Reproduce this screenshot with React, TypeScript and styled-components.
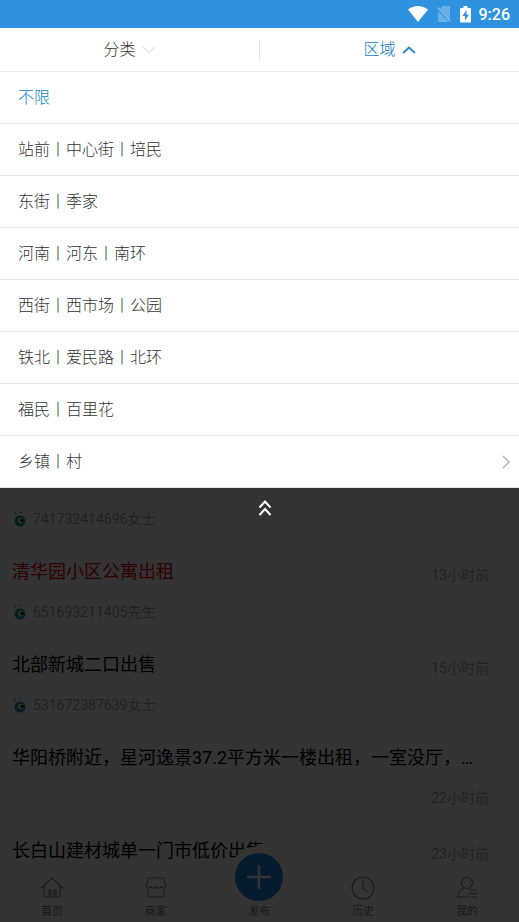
import React from "react";
import styled, { createGlobalStyle } from "styled-components";

const GlobalStyle = createGlobalStyle`
  * { box-sizing: border-box; }
  body {
    margin: 0;
    background: #fff;
    font-family: Roboto, "Noto Sans CJK SC", sans-serif;
  }
  button { font-family: inherit; }
`;

const Page = styled.div`
  display: flex;
  flex-direction: column;
  height: 100vh;
  overflow: hidden;
`;

const StatusBar = styled.header`
  display: flex;
  align-items: center;
  justify-content: flex-end;
  flex: none;
  height: 28px;
  padding-right: 9px;
  background: #2f92df;
  color: #fff;
  font-size: 16px;
  font-weight: 500;
`;

const StatusIcon = styled.svg`
  flex: none;
  margin-right: 8px;
`;

const FilterBar = styled.nav`
  display: flex;
  align-items: center;
  flex: none;
  height: 44px;
  border-bottom: 1px solid #ebebeb;
`;

const FilterTab = styled.button<{ $active?: boolean }>`
  display: flex;
  align-items: center;
  justify-content: center;
  flex: 1;
  gap: 6px;
  height: 20px;
  padding: 0;
  border: 0;
  background: none;
  color: ${(p) => (p.$active ? "#0c7cc4" : "#333")};
  font-size: 16px;
  font-weight: 300;
  line-height: 20px;

  & + & { border-left: 1px solid #e4e4e8; }
`;

const AreaMenu = styled.ul`
  flex: none;
  margin: 0;
  padding: 0;
  list-style: none;
`;

const AreaOption = styled.button<{ $selected?: boolean }>`
  display: flex;
  align-items: center;
  justify-content: space-between;
  width: 100%;
  height: 52px;
  padding: 0 8px 0 18px;
  border: 0;
  border-bottom: 1px solid #e6e6e6;
  background: #fff;
  color: ${(p) => (p.$selected ? "#0c84c8" : "#333")};
  font-size: 16px;
  font-weight: 300;
  line-height: 24px;
  text-align: left;
`;

const Behind = styled.div`
  display: flex;
  flex: 1;
  flex-direction: column;
  min-height: 0;
  position: relative;
  overflow: hidden;
`;

const Dim = styled.div`
  position: absolute;
  inset: 0;
  padding-top: 11px;
  background: rgba(0, 0, 0, 0.8);
  text-align: center;
`;

const CollapseButton = styled.button`
  margin-left: 10px;
  padding: 0;
  border: 0;
  background: none;
  line-height: 0;
`;

const Feed = styled.main`
  flex: 1;
  min-height: 0;
  padding: 21px 30px 0 12px;
  overflow: hidden;
`;

const Post = styled.article`
  padding-bottom: 29px;
`;

const PostHead = styled.div`
  display: flex;
  align-items: center;
  justify-content: space-between;
  height: 28px;
  margin-bottom: 16px;
`;

const PostTitle = styled.h2<{ $hot?: boolean }>`
  margin: 0;
  color: ${(p) => (p.$hot ? "#f00010" : "#000")};
  font-size: 18px;
  font-weight: 400;
  line-height: 28px;
  white-space: nowrap;
`;

const PostTime = styled.time`
  margin-top: 6px;
  color: #a4a4a4;
  font-size: 14px;
  line-height: 20px;
  white-space: nowrap;
`;

const PostFoot = styled.div<{ $end?: boolean }>`
  display: flex;
  align-items: center;
  justify-content: ${(p) => (p.$end ? "flex-end" : "flex-start")};
  gap: 6px;
  height: 20px;
  color: #a4a4a4;
  font-size: 14px;
  line-height: 20px;

  time { margin-top: 0; }
`;

const TabBar = styled.nav`
  display: flex;
  flex: none;
  height: 54px;
  border-top: 1px solid #eee;
  background: #fff;
`;

const TabItem = styled.button`
  display: flex;
  flex: 1;
  flex-direction: column;
  align-items: center;
  justify-content: flex-end;
  gap: 4px;
  position: relative;
  padding: 0 0 2px;
  border: 0;
  background: none;
  color: #777;
  font-size: 11px;
  line-height: 16px;
`;

const PublishDisc = styled.span`
  display: flex;
  align-items: center;
  justify-content: center;
  position: absolute;
  bottom: 14px;
  width: 62px;
  height: 62px;
  border: 7px solid #fff;
  border-radius: 50%;
  background: #2488e8;
`;

const TabLabel = styled.span`
  position: relative;
`;

const Wifi = () => (
  <StatusIcon width="20" height="16" viewBox="0 0 20 16" fill="#fff">
    <path d="M10 16 0 3.6C3 1.3 6.300 0 10 0s7 1.300 10 3.600Z" />
  </StatusIcon>
);

const NoSim = () => (
  <StatusIcon width="16" height="18" viewBox="0 0 16 18">
    <path d="M6.500 1H14v14L4 4Z M2 6v11h11Z" fill="#fff" opacity=".28" />
    <path d="m1.500 2.500 13 14" stroke="#fff" strokeWidth="1.300" opacity=".4" />
  </StatusIcon>
);

const Battery = () => (
  <StatusIcon width="11" height="18" viewBox="0 0 11 18">
    <path d="M3.500 1h4v2H10a1 1 0 0 1 1 1v12.500a1 1 0 0 1-1 1H1a1 1 0 0 1-1-1V4a1 1 0 0 1 1-1h2.500Z" fill="#fff" />
    <path d="M6.500 5 2.500 11h2.500v4.500l4-6H6.500Z" fill="#2f92df" />
  </StatusIcon>
);

const Chevron = ({ up }: { up?: boolean }) => (
  <svg width="14" height="8" viewBox="0 0 14 8" fill="none" stroke={up ? "#2e86c8" : "#e2e2e2"} strokeWidth={up ? 1.8 : 1.2}>
    <path d={up ? "m1 7 6-5.500L13 7" : "m1 1 6 5.500L13 1"} />
  </svg>
);

const More = () => (
  <svg width="10" height="14" viewBox="0 0 10 14" fill="none" stroke="#b0b0b0" strokeWidth="1.400">
    <path d="m2 1 6 6-6 6" />
  </svg>
);

const DoubleUp = () => (
  <svg width="14" height="18" viewBox="0 0 14 18" fill="none" stroke="#fff" strokeWidth="2">
    <path d="m1.500 8.500 5.500-6 5.500 6M1.500 16 7 10l5.500 6" />
  </svg>
);

const Avatar = ({ color }: { color: string }) => (
  <svg width="15" height="16" viewBox="0 0 15 16">
    <circle cx="8" cy="10" r="5.500" fill={color} />
    <circle cx="9" cy="9.500" r="2.800" fill="#fff" />
    <circle cx="10" cy="9.500" r="1.800" fill="#222" />
    <path d="M3 1v3M8 1.500h2" stroke={color} />
  </svg>
);

const tabSvg = { width: 26, height: 24, viewBox: "0 0 26 24", fill: "none", stroke: "#888", strokeWidth: 1.2 };

const HomeIcon = () => (
  <svg {...tabSvg}>
    <path d="M2 12.500 13 2l11 10.500M5 10v11h5v-7h2v7h3v-7h2v7h4V10" />
  </svg>
);

const ShopIcon = () => (
  <svg {...tabSvg}>
    <path d="M6 2h14l3 7c0 4-4.500 4-5 1-.5 3-4.500 3-5 0-.5 3-4.500 3-5 0-.5 3-5 3-5-1ZM5 12v9h16v-9" />
  </svg>
);

const ClockIcon = () => (
  <svg {...tabSvg}>
    <circle cx="13" cy="12" r="11" />
    <path d="M13 5v7l4 4" />
  </svg>
);

const UserIcon = () => (
  <svg {...tabSvg}>
    <circle cx="13" cy="7" r="5.500" />
    <path d="M10 12c-4 1-6 4-6.500 9H15M15 14h7M15 17.500h9M17 21h6" />
  </svg>
);

const areas = [
  "不限",
  "站前丨中心街丨培民",
  "东街丨季家",
  "河南丨河东丨南环",
  "西街丨西市场丨公园",
  "铁北丨爱民路丨北环",
  "福民丨百里花",
  "乡镇丨村",
];

type PostData = { title?: string; hot?: boolean; time?: string; author?: string; avatar?: string; long?: boolean };

const posts: PostData[] = [
  { author: "741732414696女士", avatar: "#20a090" },
  { title: "清华园小区公寓出租", hot: true, time: "13小时前", author: "651693211405先生", avatar: "#2098a8" },
  { title: "北部新城二口出售", time: "15小时前", author: "531672387639女士", avatar: "#2090c8" },
  { title: "华阳桥附近，星河逸景37.2平方米一楼出租，一室没厅，…", time: "22小时前", long: true },
  { title: "长白山建材城单一门市低价出售", time: "23小时前" },
];

export default function App() {
  return (
    <Page>
      <GlobalStyle />
      <StatusBar>
        <Wifi />
        <NoSim />
        <Battery />
        <time>9:26</time>
      </StatusBar>
      <FilterBar>
        <FilterTab type="button">
          分类
          <Chevron />
        </FilterTab>
        <FilterTab type="button" $active aria-expanded="true">
          区域
          <Chevron up />
        </FilterTab>
      </FilterBar>
      <AreaMenu>
        {areas.map((area, i) => (
          <li key={area}>
            <AreaOption type="button" $selected={i === 0}>
              {area}
              {i === areas.length - 1 && <More />}
            </AreaOption>
          </li>
        ))}
      </AreaMenu>
      <Behind>
        <Feed>
          {posts.map((post, i) => (
            <Post key={i}>
              {post.title && (
                <PostHead>
                  <PostTitle $hot={post.hot}>{post.title}</PostTitle>
                  {!post.long && <PostTime>{post.time}</PostTime>}
                </PostHead>
              )}
              {post.author && (
                <PostFoot>
                  <Avatar color={post.avatar!} />
                  {post.author}
                </PostFoot>
              )}
              {post.long && (
                <PostFoot $end>
                  <PostTime>{post.time}</PostTime>
                </PostFoot>
              )}
            </Post>
          ))}
        </Feed>
        <TabBar>
          <TabItem type="button">
            <HomeIcon />
            首页
          </TabItem>
          <TabItem type="button">
            <ShopIcon />
            商家
          </TabItem>
          <TabItem type="button">
            <PublishDisc>
              <svg width="26" height="26" viewBox="0 0 26 26" stroke="#fff" strokeWidth="2.500">
                <path d="M13 1v24M1 13h24" />
              </svg>
            </PublishDisc>
            <TabLabel>发布</TabLabel>
          </TabItem>
          <TabItem type="button">
            <ClockIcon />
            历史
          </TabItem>
          <TabItem type="button">
            <UserIcon />
            我的
          </TabItem>
        </TabBar>
        <Dim>
          <CollapseButton type="button" aria-label="收起">
            <DoubleUp />
          </CollapseButton>
        </Dim>
      </Behind>
    </Page>
  );
}
